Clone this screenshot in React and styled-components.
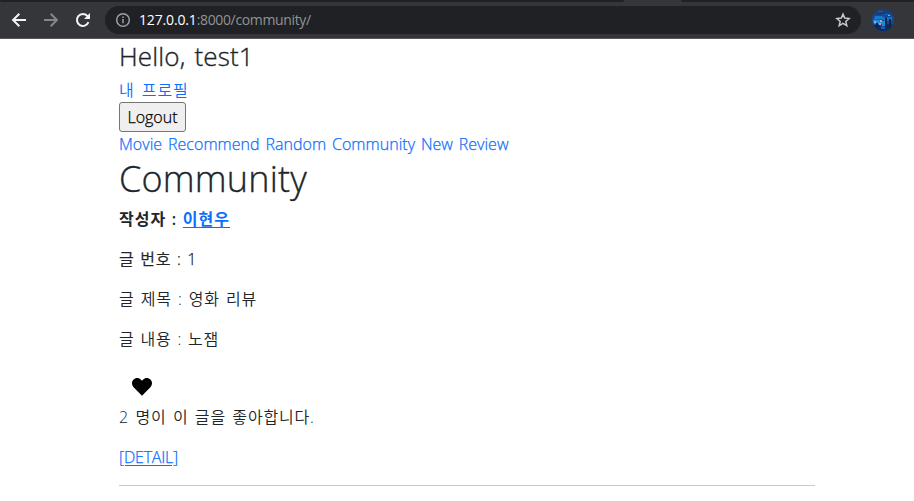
import React from "react";
import styled, { createGlobalStyle } from "styled-components";

const GlobalStyle = createGlobalStyle`
  *, *::before, *::after { box-sizing: border-box; }
  body {
    margin: 0;
    background: #fff;
    color: #212529;
    font-family: "Open Sans", "Noto Sans CJK KR", sans-serif;
    font-size: 16px;
    font-weight: 350;
    line-height: 24px;
    overflow: hidden;
  }
`;

const Browser = styled.div`
  display: flex;
  flex-direction: column;
  height: 501px;
`;

const TabStrip = styled.div`
  display: flex;
  justify-content: flex-end;
  height: 2px;
  background: #35363a;
`;

const TabEdge = styled.div`
  width: ${(p) => p.$width}px;
  margin-right: ${(p) => p.$gap || 0}px;
  background: #202124;
  border-radius: 0 0 3px 3px;
`;

const Toolbar = styled.header`
  display: flex;
  align-items: center;
  height: 37px;
  padding: 0 20px 1px 10px;
  background: #35363a;
  border-bottom: 1px solid #5b565e;
`;

const NavButton = styled.span`
  display: flex;
  width: 18px;
  height: 18px;
  margin-right: ${(p) => p.$gap}px;
  color: ${(p) => (p.$dim ? "#85868a" : "#f1f3f4")};
`;

const AddressBar = styled.div`
  display: flex;
  align-items: center;
  flex: 1;
  height: 28px;
  padding: 0 10px;
  border-radius: 14px;
  background: #202124;
  color: #9aa0a6;
`;

const Url = styled.span`
  flex: 1;
  margin-left: 8px;
  font-size: 14px;
  font-weight: 400;
  line-height: 20px;
  letter-spacing: ${(p) => p.$spacing}px;
  color: #919396;
`;

const Host = styled.span`
  color: #fff;
  letter-spacing: -0.15px;
`;

const Avatar = styled.svg`
  margin-left: 11px;
`;

const Page = styled.main`
  width: 696px;
  margin-left: 119px;
`;

const Greeting = styled.h3`
  margin: 0;
  height: 39px;
  font-size: 26px;
  font-weight: 350;
  line-height: 35px;
  letter-spacing: ${(p) => p.$spacing}px;
  word-spacing: 2px;
  white-space: nowrap;
  -webkit-text-stroke: 0.35px currentColor;
`;

const Heading = styled.h1`
  margin: 0 0 3px;
  height: 48px;
  font-size: 36px;
  font-weight: 350;
  line-height: 46px;
  letter-spacing: ${(p) => p.$spacing}px;
  -webkit-text-stroke: 0.35px currentColor;
`;

const Line = styled.div`
  height: 24px;
  margin-bottom: ${(p) => p.$after || 0}px;
  font-weight: ${(p) => (p.$bold ? 600 : 350)};
  letter-spacing: ${(p) => p.$spacing || 0}px;
  word-spacing: ${(p) => p.$word || 0}px;
  white-space: nowrap;
  -webkit-text-stroke: ${(p) => (p.$latin ? "0.25px currentColor" : "0")};
`;

const Link = styled.a`
  color: #0d6efd;
  text-decoration: ${(p) => (p.$underlined ? "underline" : "none")};
  text-underline-offset: 2px;
  text-decoration-thickness: 1px;
`;

const LogoutButton = styled.button`
  display: block;
  width: 67px;
  height: 30px;
  padding: 0;
  border: 1px solid #767676;
  border-radius: 3px;
  background: #efefef;
  color: #000;
  font: inherit;
  letter-spacing: ${(p) => p.$spacing}px;
  -webkit-text-stroke: 0.25px currentColor;
`;

const LikeButton = styled.button`
  display: flex;
  align-items: center;
  height: 38px;
  padding: 2px 13px 0;
  border: 0;
  background: transparent;
  color: #000;
`;

const Divider = styled.hr`
  height: 1px;
  margin: 0;
  border: 0;
  background: #c8c9ca;
`;

const stroke = { fill: "none", stroke: "currentColor", strokeWidth: 2 };

export default function App() {
  return (
    <Browser>
      <GlobalStyle />
      <TabStrip>
        <TabEdge $width={624} $gap={57} />
        <TabEdge $width={233} />
      </TabStrip>
      <Toolbar>
        <NavButton $gap={14}>
          <svg width="18" height="18" viewBox="0 0 18 18" {...stroke}>
            <path d="M16 9H3.5M9.3 2.8 3.1 9l6.2 6.2" />
          </svg>
        </NavButton>
        <NavButton $gap={14} $dim>
          <svg width="18" height="18" viewBox="0 0 18 18" {...stroke}>
            <path d="M2 9h12.5M8.7 2.8 14.9 9l-6.2 6.2" />
          </svg>
        </NavButton>
        <NavButton $gap={13}>
          <svg width="18" height="18" viewBox="0 0 18 18" {...stroke}>
            <path d="M14.5 11.2A6 6 0 1 1 13.4 4.9L15 6.5" />
            <path d="M16 2v6h-6z" fill="currentColor" stroke="none" />
          </svg>
        </NavButton>
        <AddressBar>
          <svg width="16" height="16" viewBox="0 0 16 16" fill="none" stroke="currentColor" strokeWidth="1.5">
            <circle cx="8" cy="8" r="6.3" />
            <path d="M8 7.1v4.2M8 4.5v1.6" />
          </svg>
          <Url $spacing={-0.36}>
            <Host>127.0.0.1</Host>:8000/community/
          </Url>
          <svg width="16" height="16" viewBox="0 0 16 16" fill="none" stroke="#c6c8ca" strokeWidth="1.5">
            <path d="m8 2.1 1.7 4 4.4.4-3.3 2.9 1 4.3L8 11.4l-3.8 2.3 1-4.3-3.3-2.9 4.4-.4z" />
          </svg>
        </AddressBar>
        <Avatar width="22" height="22" viewBox="0 0 22 22">
          <defs>
            <clipPath id="avatarCircle">
              <circle cx="11" cy="11" r="11" />
            </clipPath>
          </defs>
          <g clipPath="url(#avatarCircle)">
            <path d="M0 0h22v22H0z" fill="#124a91" />
            <path d="M0 0h22v5l-8-1-5 2-9-1z" fill="#183f7b" />
            <path d="M3 7h7l3 2 7-1v3l-7 1-3-2-8 1z" fill="#1677cf" />
            <path d="M1 11h6l2 1h6v3h-2v3h-3v-3H2z" fill="#2088d8" />
            <path d="M0 16h7l2 2 4-1 2-2 7 1v6H0z" fill="#0b2a62" />
            <path d="M13 9h2v8h-2zM17 10h2v8h-2zM4 14h2v4H4z" fill="#132444" />
            <path d="M2 12h2v2H2zM8 11h2v2H8zM7 14h2v2H7zM16 6h2v1h-2z" fill="#c49aad" />
            <path d="M9 18h4v2H9zM6 2h5v1H6zM13 5h5v1h-5z" fill="#1760a9" />
          </g>
        </Avatar>
      </Toolbar>
      <Page>
        <Greeting $spacing={0.15}>Hello, test1</Greeting>
        <Line $spacing={0.95} $word={2}>
          <Link>내 프로필</Link>
        </Line>
        <LogoutButton $spacing={0}>Logout</LogoutButton>
        <Line $latin $spacing={0.04} $word={1.6}>
          <Link>Movie</Link> <Link>Recommend</Link> <Link>Random</Link>{" "}
          <Link>Community</Link> <Link>New Review</Link>
        </Line>
        <Heading $spacing={0.2}>Community</Heading>
        <Line $bold $after={16} $spacing={1} $word={0.5}>
          작성자 : <Link $underlined>이현우</Link>
        </Line>
        <Line $latin $after={16} $spacing={0.65} $word={1.1}>글 번호 : 1</Line>
        <Line $after={16} $spacing={0.85} $word={1.1}>글 제목 : 영화 리뷰</Line>
        <Line $after={16} $spacing={0.75} $word={1.1}>글 내용 : 노잼</Line>
        <LikeButton aria-label="좋아요">
          <svg width="20" height="18" viewBox="0 0 20 18" fill="currentColor">
            <path d="M10 17.7 1.6 9.2C-.5 7-.5 3.6 1.4 1.7 3.6-.5 7-.3 9 1.7l1 1 1-1c2-2 5.4-2.2 7.6 0 1.9 1.9 1.9 5.3-.2 7.5z" />
          </svg>
        </LikeButton>
        <Line $after={16} $spacing={0.8} $word={1.5}>2 명이 이 글을 좋아합니다.</Line>
        <Line $latin $after={16} $spacing={-0.2}>
          <Link $underlined>[DETAIL]</Link>
        </Line>
        <Divider />
      </Page>
    </Browser>
  );
}
